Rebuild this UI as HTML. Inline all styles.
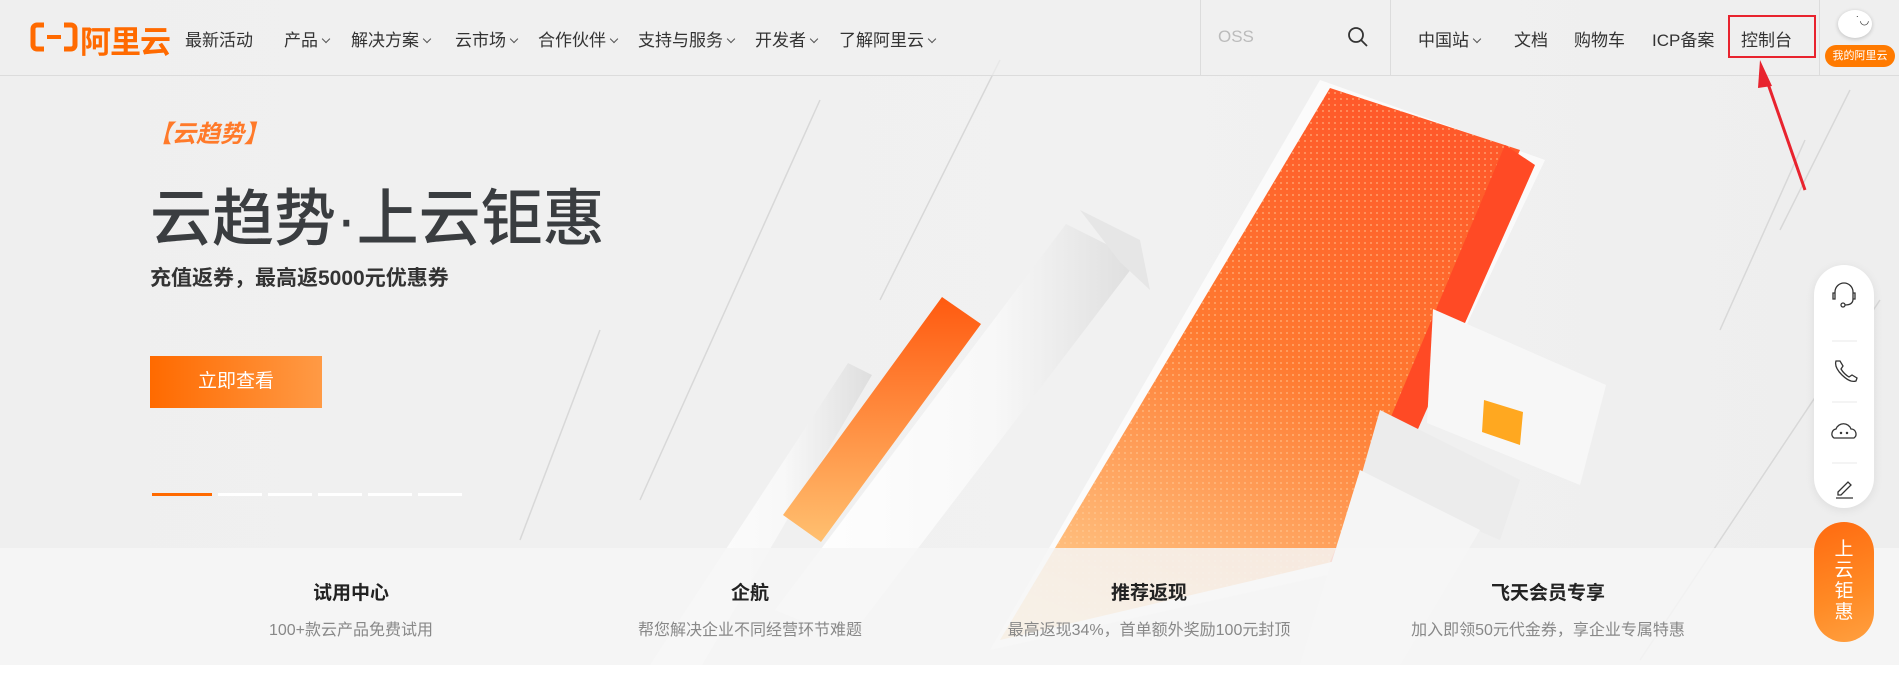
<!DOCTYPE html>
<html><head><meta charset="utf-8"><style>
*{margin:0;padding:0;box-sizing:border-box}
body{width:1899px;height:679px;overflow:hidden;background:#fff;font-family:"Liberation Sans","Noto Sans CJK SC",sans-serif;position:relative}
.hero{position:absolute;left:0;top:0;width:1899px;height:665px;background:linear-gradient(90deg,#efefef,#f1f1f1 60%,#eeeeee)}
.nav{position:absolute;left:0;top:0;width:1899px;height:76px;border-bottom:1px solid #dcdcdc;background:rgba(240,240,240,.7)}
.t{position:absolute;white-space:nowrap}
.nav .t{top:26px;font-size:17px;color:#333}
.chev{display:inline-block;width:6px;height:6px;border-right:1px solid #555;border-bottom:1px solid #555;transform:rotate(45deg);margin-left:5px;position:relative;top:-4px}
.band{position:absolute;left:0;top:548px;width:1899px;height:117px;background:rgba(246,246,246,.85)}
.band .h{position:absolute;top:30px;font-size:19px;font-weight:bold;color:#222;transform:translateX(-50%);white-space:nowrap}
.band .s{position:absolute;top:68px;font-size:16px;color:#888;transform:translateX(-50%);white-space:nowrap}
</style></head><body>
<div class="hero">
<svg width="1899" height="665" style="position:absolute;left:0;top:0">
<defs>
<linearGradient id="og" x1="0.6" y1="0" x2="0.2" y2="1"><stop offset="0" stop-color="#ff5a2a"/><stop offset=".45" stop-color="#ff7a30"/><stop offset="1" stop-color="#ffcf90"/></linearGradient>
<linearGradient id="og2" x1="0" y1="0" x2="0" y2="1"><stop offset="0" stop-color="#ff5a10"/><stop offset="1" stop-color="#ffc070"/></linearGradient>
<linearGradient id="wg" x1="0" y1="0" x2="1" y2="0"><stop offset="0" stop-color="#ffffff"/><stop offset=".6" stop-color="#f8f8f8"/><stop offset="1" stop-color="#dedede"/></linearGradient>
<pattern id="dots" width="6" height="6" patternUnits="userSpaceOnUse"><circle cx="3" cy="3" r="0.9" fill="#ffd0a0" opacity=".7"/></pattern>
</defs>
<g stroke="#d8d8d8" stroke-width="1.5" fill="none">
<line x1="820" y1="100" x2="640" y2="500"/><line x1="1000" y1="60" x2="880" y2="300"/><line x1="1850" y1="90" x2="1780" y2="230"/><line x1="1805" y1="140" x2="1720" y2="330"/><line x1="600" y1="330" x2="520" y2="540"/><line x1="1880" y1="300" x2="1640" y2="660"/>
</g>
<polygon points="848,363 872,375 702,665 650,665" fill="url(#wg)"/>
<polygon points="942,297 981,324 821,542 783,515" fill="url(#og2)"/>
<polygon points="1066,224 1138,260 848,640 775,610" fill="url(#wg)"/>
<polygon points="1080,210 1140,240 1150,290 1120,262" fill="#e6e6e6"/>
<polygon points="1320,80 1545,160 1350,570 990,650" fill="#fff" opacity=".7"/>
<polygon points="1330,88 1520,150 1340,560 1000,640" fill="url(#og)"/>
<polygon points="1330,88 1520,150 1340,560 1000,640" fill="url(#dots)"/>
<polygon points="1505,145 1535,165 1360,560 1330,562" fill="#ff4a25"/>
<polygon points="1433,309 1606,385 1580,485 1427,423" fill="#f7f7f7"/>
<polygon points="1380,410 1520,480 1500,540 1360,480" fill="#ececec"/>
<polygon points="1484,400 1523,412 1520,445 1482,432" fill="#ffa820"/>
<polygon points="1360,470 1480,530 1400,665 1300,665" fill="#f5f5f5"/>
</svg>
<div class="t" style="left:148px;top:114px;font-size:24px;font-weight:bold;font-style:italic;color:#ff7a2a">【云趋势】</div>
<div class="t" style="left:150px;top:168px;font-size:62px;color:#3a3d40;font-weight:500">云趋势·上云钜惠</div>
<div class="t" style="left:150px;top:262px;font-size:21px;font-weight:bold;color:#333">充值返券，最高返5000元优惠券</div>
<div style="position:absolute;left:150px;top:356px;width:172px;height:52px;background:linear-gradient(90deg,#ff6a00,#ff9a45);color:#fff;font-size:19px;text-align:center;line-height:52px">立即查看</div>
<div style="position:absolute;left:152px;top:493px;width:60px;height:3px;background:#ff6a00"></div>
<div style="position:absolute;left:218px;top:493px;width:44px;height:3px;background:#fff"></div>
<div style="position:absolute;left:268px;top:493px;width:44px;height:3px;background:#fff"></div>
<div style="position:absolute;left:318px;top:493px;width:44px;height:3px;background:#fff"></div>
<div style="position:absolute;left:368px;top:493px;width:44px;height:3px;background:#fff"></div>
<div style="position:absolute;left:418px;top:493px;width:44px;height:3px;background:#fff"></div>
</div>
<div class="band">
<div class="h" style="left:351px">试用中心</div><div class="s" style="left:351px">100+款云产品免费试用</div>
<div class="h" style="left:750px">企航</div><div class="s" style="left:750px">帮您解决企业不同经营环节难题</div>
<div class="h" style="left:1149px">推荐返现</div><div class="s" style="left:1149px">最高返现34%，首单额外奖励100元封顶</div>
<div class="h" style="left:1548px">飞天会员专享</div><div class="s" style="left:1548px">加入即领50元代金券，享企业专属特惠</div>
</div>
<div class="nav">
<svg style="position:absolute;left:30px;top:22px" width="48" height="30"><path d="M14 3H7a4 4 0 0 0-4 4v16a4 4 0 0 0 4 4h7M34 3h7a4 4 0 0 1 4 4v16a4 4 0 0 1-4 4h-7" stroke="#ff6a00" stroke-width="5" fill="none"/><rect x="17" y="13" width="14" height="4" fill="#ff6a00"/></svg>
<div class="t" style="left:80px;top:17px;font-size:31px;font-weight:bold;color:#ff6a00;letter-spacing:-1px">阿里云</div>
<div class="t" style="left:185px">最新活动</div>
<div class="t" style="left:284px">产品<span class="chev"></span></div>
<div class="t" style="left:351px">解决方案<span class="chev"></span></div>
<div class="t" style="left:455px">云市场<span class="chev"></span></div>
<div class="t" style="left:538px">合作伙伴<span class="chev"></span></div>
<div class="t" style="left:638px">支持与服务<span class="chev"></span></div>
<div class="t" style="left:755px">开发者<span class="chev"></span></div>
<div class="t" style="left:839px">了解阿里云<span class="chev"></span></div>
<div style="position:absolute;left:1200px;top:0;width:1px;height:76px;background:#dcdcdc"></div>
<div style="position:absolute;left:1390px;top:0;width:1px;height:76px;background:#dcdcdc"></div>
<div style="position:absolute;left:1819px;top:0;width:1px;height:76px;background:#dcdcdc"></div>
<div class="t" style="left:1218px;top:27px;font-size:17px;color:#bbb">OSS</div>
<svg style="position:absolute;left:1347px;top:26px" width="22" height="22"><circle cx="9" cy="9" r="7" stroke="#333" stroke-width="1.8" fill="none"/><line x1="14" y1="14" x2="20" y2="20" stroke="#333" stroke-width="1.8"/></svg>
<div class="t" style="left:1418px">中国站<span class="chev"></span></div>
<div class="t" style="left:1514px">文档</div>
<div class="t" style="left:1574px">购物车</div>
<div class="t" style="left:1652px">ICP备案</div>
<div class="t" style="left:1741px">控制台</div>
<div style="position:absolute;left:1728px;top:15px;width:88px;height:43px;border:2px solid #e8232e"></div>
<div style="position:absolute;left:1838px;top:10px;width:34px;height:28px;border-radius:50%;background:#fff;box-shadow:0 1px 4px rgba(0,0,0,.2)"></div>
<div class="t" style="left:1856px;top:14px;font-size:11px;color:#333">˙◡</div>
<div class="t" style="left:1825px;top:45px;width:70px;height:22px;border-radius:11px;background:#ff7a00;color:#fff;font-size:11px;text-align:center;line-height:22px">我的阿里云</div>
</div>
<svg width="1899" height="679" style="position:absolute;left:0;top:0;pointer-events:none">
<line x1="1805" y1="190" x2="1766" y2="78" stroke="#e8232e" stroke-width="3"/>
<polygon points="1760,60 1772,86 1758,88" fill="#e8232e"/>
</svg>
<div style="position:absolute;left:1814px;top:265px;width:60px;height:243px;border-radius:30px;background:#fff;box-shadow:0 2px 10px rgba(0,0,0,.08)"></div>
<svg width="60" height="243" style="position:absolute;left:1814px;top:265px" fill="none" stroke="#333" stroke-width="1.3">
<path d="M21 32v-5a9 9 0 0 1 18 0v5M21 28h-2v6h2zM39 28h2v6h-2zM39 34q0 6-8 6"/><circle cx="29" cy="40" r="2"/>
<line x1="18" y1="76" x2="43" y2="76" stroke="#eee"/>
<path d="M22 96q-2 6 6 14t14 6l1-3-5-3-3 2q-5-3-8-8l2-3-3-5z"/>
<line x1="18" y1="137" x2="43" y2="137" stroke="#eee"/>
<path d="M20 173a5 5 0 0 1 2-9a8 8 0 0 1 15 0a5 5 0 0 1 3 9z"/><circle cx="27" cy="168" r=".6"/><circle cx="33" cy="168" r=".6"/>
<line x1="18" y1="198" x2="43" y2="198" stroke="#eee"/>
<path d="M24 227l10-10 3 3-10 10h-3zM22 233h17"/>
</svg>
<div style="position:absolute;left:1814px;top:522px;width:60px;height:120px;border-radius:30px;background:linear-gradient(160deg,#ff6a10,#ff8a25 60%,#ffa040);color:#fff;font-size:19px;line-height:21px;text-align:center;padding-top:17px">上<br>云<br>钜<br>惠</div>
</body></html>
